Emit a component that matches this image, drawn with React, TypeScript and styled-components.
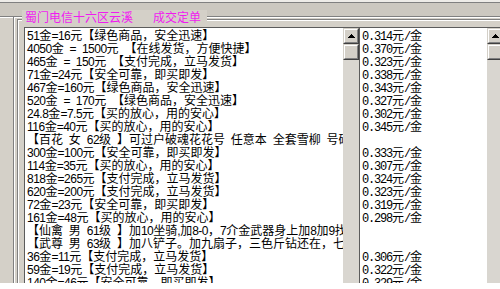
import React from "react";
import styled, { createGlobalStyle } from "styled-components";

const Global = createGlobalStyle`
  html, body { margin: 0; padding: 0; background: #ffffff; }
  body { font-family: "Liberation Sans", "Noto Sans CJK SC", sans-serif; }
  * { box-sizing: border-box; }
`;

const Screen = styled.div`
  width: 500px;
  height: 283px;
  overflow: hidden;
  background: #d4d0c8;
  border-top: 2px solid #eeece8;
  display: flex;
  flex-direction: column;
`;

const TopBar = styled.div`
  flex-shrink: 0;
  height: 15px;
  background: #ccc8c0;
  border-top: 1px solid #808080;
  border-bottom: 1px solid #808080;
  box-shadow: 0 1px 0 #ffffff;
`;

const Body = styled.div`
  flex: 1;
  min-height: 0;
  display: flex;
`;

const LeftRail = styled.div`
  flex-shrink: 0;
  width: 14px;
  border-right: 1px solid #808080;
  box-shadow: 1px 0 0 #ffffff;
`;

const Group = styled.div`
  position: relative;
  flex-shrink: 0;
  width: 490px;
  margin: 2px 0 0 3px;
  padding: 7px 0 0 6px;
  border-top: 1px solid #808080;
  border-left: 1px solid #808080;
  box-shadow: inset 1px 1px 0 #ffffff;
  display: flex;
  align-items: flex-start;
`;

const Legend = styled.div`
  position: absolute;
  left: 4px;
  top: -10px;
  padding: 0 6px 0 3px;
  background: #d4d0c8;
  display: flex;
  gap: 20px;
  font-family: "Noto Sans CJK SC", sans-serif;
  font-size: 12px;
  line-height: 14px;
  color: #f01cf0;
`;

const Frame = styled.div`
  flex-shrink: 0;
  height: 300px;
  display: flex;
  border-top: 1px solid #5c5c5c;
  border-left: 1px solid #5c5c5c;
`;

const ListArea = styled.div<{ $w: number }>`
  width: ${(p) => p.$w}px;
  flex-shrink: 0;
  height: 300px;
  overflow: hidden;
  background: #ffffff;
  padding-left: 2px;
`;

const Row = styled.div`
  height: 13px;
  line-height: 13px;
  white-space: nowrap;
  font-family: "Noto Sans CJK SC", sans-serif;
  font-size: 12px;
  color: #000000;
`;

const Lat = styled.span<{ $mono?: boolean }>`
  font-family: ${(p) => (p.$mono ? `"Liberation Mono", monospace` : `"Liberation Sans", sans-serif`)};
  letter-spacing: ${(p) => (p.$mono ? "-1.2px" : "-0.5px")};
  word-spacing: ${(p) => (p.$mono ? "0" : "3px")};
`;

const ScrollTrack = styled.div`
  width: 16px;
  flex-shrink: 0;
  height: 300px;
  display: flex;
  flex-direction: column;
  background: #d9d6d0;
`;

const ScrollButton = styled.div`
  width: 16px;
  height: 16px;
  flex-shrink: 0;
  background: #d4d0c8;
  border-style: solid;
  border-width: 1px;
  border-color: #d4d0c8 #404040 #404040 #d4d0c8;
  display: flex;
`;

const ButtonFace = styled.div`
  flex: 1;
  background: #d4d0c8;
  border-style: solid;
  border-width: 1px;
  border-color: #ffffff #808080 #808080 #ffffff;
  display: flex;
  align-items: center;
  justify-content: center;
`;

const UpArrow = () => (
  <svg width="7" height="4" viewBox="0 0 7 4" shapeRendering="crispEdges">
    <path d="M3 0 H4 V1 H5 V2 H6 V3 H7 V4 H0 V3 H1 V2 H2 V1 H3 Z" fill="#000000" />
  </svg>
);

const VScroll = () => (
  <ScrollTrack>
    <ScrollButton>
      <ButtonFace>
        <UpArrow />
      </ButtonFace>
    </ScrollButton>
    <ScrollButton>
      <ButtonFace />
    </ScrollButton>
  </ScrollTrack>
);

const runs = (s: string) => s.match(/[\x20-\x7e]+|[^\x20-\x7e]+/g) ?? [];

const Line = ({ text, mono }: { text: string; mono?: boolean }) => (
  <Row>
    {text === ""
      ? "\u00a0"
      : runs(text).map((r, i) =>
          /^[\x20-\x7e]+$/.test(r) ? (
            <Lat key={i} $mono={mono}>
              {r}
            </Lat>
          ) : (
            <React.Fragment key={i}>{r}</React.Fragment>
          )
        )}
  </Row>
);

const orders = [
  "51金=16元【绿色商品，安全迅速】",
  "4050金 = 1500元 【在线发货，方便快捷】",
  "465金 = 150元 【支付完成，立马发货】",
  "71金=24元【安全可靠，即买即发】",
  "467金=160元【绿色商品，安全迅速】",
  "520金 = 170元 【绿色商品，安全迅速】",
  "24.8金=7.5元【买的放心，用的安心】",
  "116金=40元【买的放心，用的安心】",
  "【百花 女 62级 】可过户破魂花花号 任意本 全套雪柳 号码多",
  "300金=100元【安全可靠，即买即发】",
  "114金=35元【买的放心，用的安心】",
  "818金=265元【支付完成，立马发货】",
  "620金=200元【支付完成，立马发货】",
  "72金=23元【安全可靠，即买即发】",
  "161金=48元【买的放心，用的安心】",
  "【仙禽 男 61级 】加10坐骑,加8-0，7介金武器身上加8加9找",
  "【武尊 男 63级 】加八铲子。加九扇子，三色斤钻还在，七彩",
  "36金=11元【支付完成，立马发货】",
  "59金=19元【支付完成，立马发货】",
  "140金=46元【安全可靠，即买即发】",
];

const prices = [
  "0.314", "0.370", "0.323", "0.338", "0.343", "0.327", "0.302", "0.345", "",
  "0.333", "0.307", "0.324", "0.323", "0.319", "0.298", "", "",
  "0.306", "0.322", "0.329",
];

export default function App() {
  return (
    <>
      <Global />
      <Screen>
        <TopBar />
        <Body>
          <LeftRail />
          <Group>
            <Legend>
              <span>蜀门电信十六区云溪</span>
              <span>成交定单</span>
            </Legend>
            <Frame>
              <ListArea $w={318}>
                {orders.map((t, i) => (
                  <Line key={i} text={t} />
                ))}
              </ListArea>
              <VScroll />
            </Frame>
            <Frame>
              <ListArea $w={127}>
                {prices.map((p, i) => (
                  <Line key={i} text={p ? `${p}元/金` : ""} mono />
                ))}
              </ListArea>
              <VScroll />
            </Frame>
          </Group>
        </Body>
      </Screen>
    </>
  );
}
